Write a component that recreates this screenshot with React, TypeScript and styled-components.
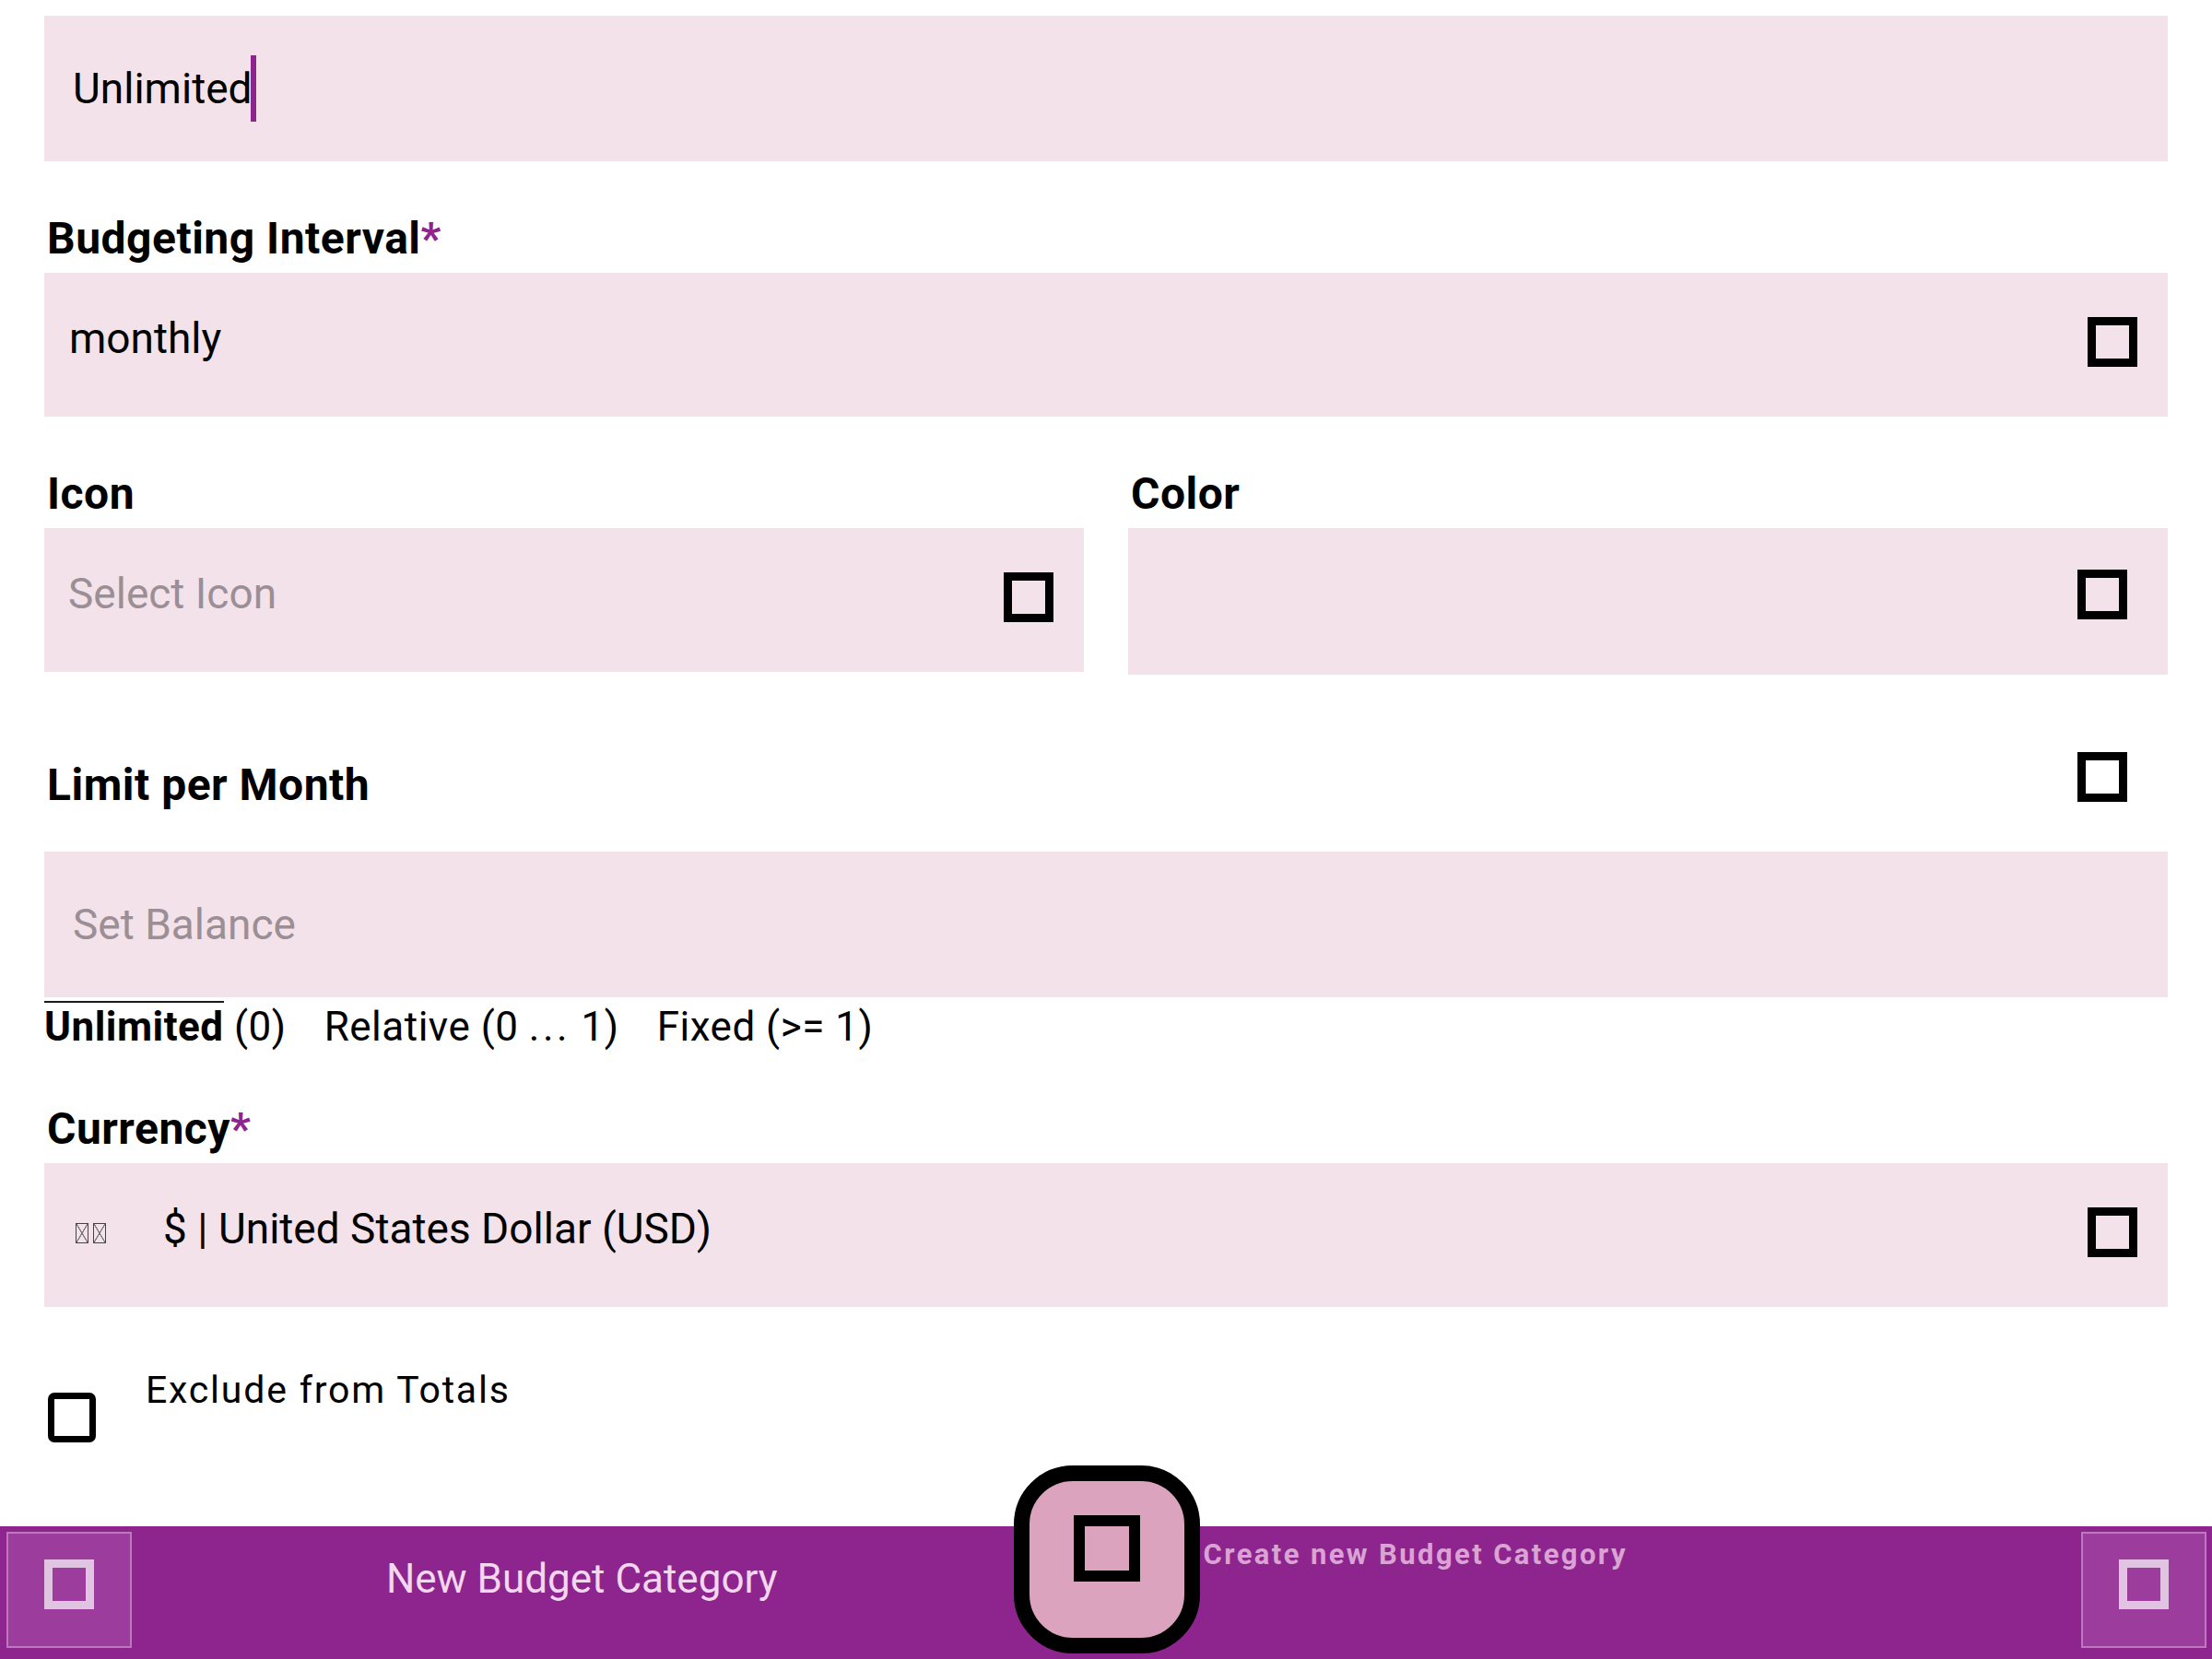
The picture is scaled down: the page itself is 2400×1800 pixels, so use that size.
import React from 'react';
import styled, { createGlobalStyle } from 'styled-components';

const Global = createGlobalStyle`
  html, body { margin: 0; padding: 0; background: #ffffff; }
  body { font-family: Roboto, "Liberation Sans", sans-serif; color: #000; }
  * { box-sizing: border-box; }
`;

const Page = styled.div`
  min-height: 100vh;
  display: flex;
  flex-direction: column;
`;

const Form = styled.main`
  display: flex;
  flex-direction: column;
  padding: 17px 48px 0;
`;

const Field = styled.div<{ $h?: number; $pl?: number; $pr?: number; $select?: boolean }>`
  height: ${(p) => p.$h ?? 158}px;
  background: #f3e2ea;
  display: flex;
  align-items: center;
  justify-content: ${(p) => (p.$select ? 'space-between' : 'flex-start')};
  padding: 0 ${(p) => p.$pr ?? 33}px 0 ${(p) => p.$pl ?? 31}px;
  font-size: 46px;
`;

const Value = styled.span<{ $muted?: boolean; $lift?: boolean }>`
  color: ${(p) => (p.$muted ? '#9b8f95' : '#000')};
  white-space: pre;
  line-height: 54px;
  margin-bottom: ${(p) => (p.$lift ? 14 : 0)}px;
`;

const Caret = styled.span`
  display: block;
  width: 6px;
  height: 72px;
  margin-left: -2px;
  background: #8e248e;
`;

const Label = styled.div`
  font-size: 48px;
  font-weight: 700;
  letter-spacing: 0.5px;
  line-height: 56px;
  margin: 56px 0 9px;
  padding-left: 3px;
`;

const Req = styled.span`
  color: #8e248e;
`;

const Glyph = styled.span<{ $size: number; $stroke: number; $color: string; $lift?: number }>`
  display: block;
  flex-shrink: 0;
  width: ${(p) => p.$size}px;
  height: ${(p) => p.$size}px;
  border: ${(p) => p.$stroke}px solid ${(p) => p.$color};
  margin-bottom: ${(p) => (p.$lift ?? 0) * 2}px;
`;

const Pair = styled.div`
  display: grid;
  grid-template-columns: 1fr 1fr;
  column-gap: 48px;
  align-items: start;
`;

const Column = styled.div`
  display: flex;
  flex-direction: column;
`;

const LimitRow = styled.div`
  display: flex;
  justify-content: space-between;
  align-items: flex-start;
  margin-top: 84px;
  margin-bottom: 44px;
  padding-right: 44px;
`;

const RowLabel = styled(Label)`
  margin: 0;
  padding-top: 8px;
`;

const Tabs = styled.div`
  display: flex;
  gap: 41px;
  margin-top: 6px;
  font-size: 44px;
  line-height: 53px;
  letter-spacing: 0.5px;
`;

const Tab = styled.div`
  white-space: pre;
`;

const TabKey = styled.span<{ $active?: boolean }>`
  font-weight: ${(p) => (p.$active ? 700 : 400)};
  border-top: 2px solid ${(p) => (p.$active ? '#1a1a1a' : 'transparent')};
`;

const Dots = styled.span`
  letter-spacing: 3.5px;
`;

const CurrencyValue = styled.div`
  display: flex;
  align-items: baseline;
  margin-bottom: 14px;
`;

const Flag = styled.span`
  display: inline-flex;
  gap: 5px;
  margin-left: 3px;
  margin-right: 62px;
`;

const FlagBox = styled.span`
  display: inline-block;
  width: 14px;
  height: 22px;
  border: 1.5px solid #444;
  background:
    linear-gradient(to top right, transparent 46%, #777 48%, #777 52%, transparent 54%),
    linear-gradient(to top left, transparent 46%, #777 48%, #777 52%, transparent 54%);
`;

const CheckRow = styled.label`
  display: flex;
  align-items: flex-start;
  margin-top: 64px;
`;

const CheckBox = styled.span`
  display: block;
  width: 52px;
  height: 54px;
  margin: 29px 0 0 4px;
  border: 7px solid #000;
  border-radius: 7px;
`;

const CheckText = styled.span`
  margin-left: 54px;
  font-size: 41px;
  letter-spacing: 1.8px;
  line-height: 52px;
`;

const Bar = styled.footer`
  margin-top: auto;
  height: 144px;
  background: #8e248e;
  display: flex;
  align-items: flex-start;
  padding: 6px 6px 0 7px;
`;

const SideButton = styled.button`
  width: 136px;
  height: 126px;
  flex-shrink: 0;
  background: #9c3c9c;
  border: 2px solid rgba(255, 255, 255, 0.32);
  padding: 0;
  display: flex;
  align-items: center;
  justify-content: center;
`;

const TitleSlot = styled.div`
  flex: 1;
  display: flex;
  justify-content: center;
`;

const Title = styled.span`
  margin: 25px 0 0 20px;
  font-size: 44px;
  line-height: 52px;
  color: #f2d8ef;
  white-space: nowrap;
`;

const Filler = styled.div`
  flex: 1;
`;

const FabSlot = styled.div`
  position: relative;
  width: 202px;
  flex-shrink: 0;
  margin-top: -72px;
`;

const Fab = styled.button`
  width: 202px;
  height: 204px;
  padding: 0;
  background: #dba3bd;
  border: 17px solid #000;
  border-radius: 64px;
  display: flex;
  align-items: center;
  justify-content: center;
`;

const FabHint = styled.span`
  position: absolute;
  left: calc(100% + 4px);
  top: 79px;
  white-space: nowrap;
  font-size: 31px;
  font-weight: 700;
  letter-spacing: 2.4px;
  line-height: 36px;
  color: #d9a3d3;
`;

export default function App() {
  return (
    <Page>
      <Global />
      <Form>
        <Field>
          <Value>Unlimited</Value>
          <Caret />
        </Field>

        <Label>
          Budgeting Interval<Req>*</Req>
        </Label>
        <Field $h={156} $pl={27} $select>
          <Value $lift>monthly</Value>
          <Glyph $size={54} $stroke={9} $color="#000" $lift={3} />
        </Field>

        <Pair>
          <Column>
            <Label>Icon</Label>
            <Field $h={156} $pl={26} $select>
              <Value $muted $lift>Select Icon</Value>
              <Glyph $size={54} $stroke={9} $color="#000" $lift={3} />
            </Field>
          </Column>
          <Column>
            <Label>Color</Label>
            <Field $h={159} $pr={44} $select>
              <span />
              <Glyph $size={54} $stroke={9} $color="#000" $lift={8} />
            </Field>
          </Column>
        </Pair>

        <LimitRow>
          <RowLabel>Limit per Month</RowLabel>
          <Glyph $size={54} $stroke={9} $color="#000" />
        </LimitRow>

        <Field>
          <Value $muted>Set Balance</Value>
        </Field>

        <Tabs>
          <Tab>
            <TabKey $active>Unlimited</TabKey> (0)
          </Tab>
          <Tab>
            <TabKey>Relative</TabKey> (0 <Dots>...</Dots> 1)
          </Tab>
          <Tab>
            <TabKey>Fixed</TabKey> (&gt;= 1)
          </Tab>
        </Tabs>

        <Label>
          Currency<Req>*</Req>
        </Label>
        <Field $h={156} $pl={31} $select>
          <CurrencyValue>
            <Flag>
              <FlagBox />
              <FlagBox />
            </Flag>
            <Value>$ | United States Dollar (USD)</Value>
          </CurrencyValue>
          <Glyph $size={54} $stroke={9} $color="#000" $lift={3} />
        </Field>

        <CheckRow>
          <CheckBox />
          <CheckText>Exclude from Totals</CheckText>
        </CheckRow>
      </Form>

      <Bar>
        <SideButton aria-label="back">
          <Glyph $size={54} $stroke={9} $color="#e1c4e1" $lift={6} />
        </SideButton>
        <TitleSlot>
          <Title>New Budget Category</Title>
        </TitleSlot>
        <FabSlot>
          <Fab aria-label="Create new Budget Category">
            <Glyph $size={72} $stroke={12} $color="#000" $lift={12} />
          </Fab>
          <FabHint>Create new Budget Category</FabHint>
        </FabSlot>
        <Filler />
        <SideButton aria-label="menu">
          <Glyph $size={54} $stroke={9} $color="#e1c4e1" $lift={6} />
        </SideButton>
      </Bar>
    </Page>
  );
}
